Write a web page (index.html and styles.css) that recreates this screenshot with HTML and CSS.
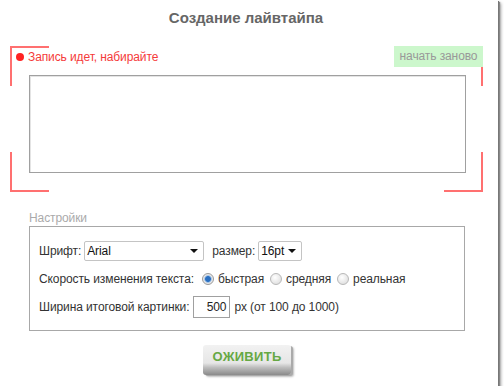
FILE: index.html
```html
<!DOCTYPE html>
<html lang="ru">
<head>
<meta charset="utf-8">
<title>Создание лайвтайпа</title>
<link rel="stylesheet" href="styles.css">
</head>
<body>
<div class="window">
  <h1 class="title">Создание лайвтайпа</h1>
  <div class="recorder">
    <span class="corner tl"></span><span class="corner tr"></span>
    <span class="corner bl"></span><span class="corner br"></span>
    <div class="status-row">
      <span class="status"><span class="dot"></span>Запись идет, набирайте</span>
      <span class="restart">начать заново</span>
    </div>
    <div class="editor"></div>
  </div>
  <div class="settings">
    <div class="settings-label">Настройки</div>
    <div class="settings-box">
      <div class="row row-font">
        <span class="lbl">Шрифт:</span>
        <span class="select select-font"><span class="val">Arial</span><span class="arrow"></span></span>
        <span class="lbl lbl-size">размер:</span>
        <span class="select select-size"><span class="val">16pt</span><span class="arrow"></span></span>
      </div>
      <div class="row row-speed">
        <span class="lbl">Скорость изменения текста:</span>
        <span class="radio on"></span><span class="opt">быстрая</span>
        <span class="radio"></span><span class="opt">средняя</span>
        <span class="radio"></span><span class="opt">реальная</span>
      </div>
      <div class="row row-width">
        <span class="lbl">Ширина итоговой картинки:</span>
        <span class="input">500</span>
        <span class="hint">px (от 100 до 1000)</span>
      </div>
    </div>
  </div>
  <div class="actions">
    <span class="go">ОЖИВИТЬ</span>
  </div>
</div>
</body>
</html>
```
FILE: styles.css
```css
html, body {
  margin: 0;
  padding: 0;
  background: #fff;
}
body {
  font-family: "Liberation Sans", Arial, sans-serif;
  font-size: 12px;
  letter-spacing: -0.1px;
  color: #333;
}
.window {
  width: 498px;
  height: 386px;
  background: #fff;
  box-sizing: border-box;
  box-shadow: 1px 1px 0 #777, 2px 2px 1px #888, 3px 3px 3px rgba(0,0,0,0.35);
  padding-top: 9px;
}
.title {
  margin: 0;
  text-align: center;
  font-size: 15px;
  line-height: 18px;
  font-weight: bold;
  letter-spacing: 0;
  color: #666;
  padding-right: 6px;
}
.recorder {
  position: relative;
  margin: 19px 0 0 10px;
  width: 473px;
  height: 146px;
}
.corner {
  position: absolute;
  width: 37px;
  height: 38px;
  border: 0 solid #ff7070;
}
.corner.tl { left: 0; top: 0; border-top-width: 2px; border-left-width: 2px; }
.corner.tr { right: 0; top: 0; border-top-width: 2px; border-right-width: 2px; }
.corner.bl { left: 0; bottom: 0; border-bottom-width: 2px; border-left-width: 2px; }
.corner.br { right: 0; bottom: 0; border-bottom-width: 2px; border-right-width: 2px; }
.status-row {
  display: flex;
  justify-content: space-between;
  align-items: center;
  height: 21px;
}
.status {
  display: flex;
  align-items: center;
  color: #f53a3a;
  padding-left: 6px;
  position: relative;
  z-index: 1;
}
.dot {
  width: 8px;
  height: 8px;
  border-radius: 50%;
  background: #f22;
  margin-right: 4px;
}
.restart {
  position: relative;
  z-index: 1;
  background: #ccf7cc;
  color: #999;
  width: 89px;
  box-sizing: border-box;
  text-align: center;
  height: 21px;
  line-height: 20px;
}
.editor {
  margin: 8px 0 0 19px;
  width: 437px;
  height: 98px;
  box-sizing: border-box;
  border: 1px solid #a0a0a0;
  box-shadow: inset 1px 1px 0 #e4e4e4;
  background: #fff;
}
.settings {
  margin: 19px 0 0 29px;
  width: 436px;
}
.settings-label {
  color: #aaa;
  line-height: 15px;
}
.settings-box {
  border: 1px solid #a8a8a8;
  height: 105px;
  box-sizing: border-box;
  padding: 14px 0 0 9px;
}
.row {
  display: flex;
  align-items: center;
}
.row-font { height: 20px; }
.row-speed { height: 16px; margin-top: 10px; }
.row-width { height: 22px; margin-top: 9px; }
.select {
  display: flex;
  align-items: center;
  justify-content: space-between;
  height: 20px;
  box-sizing: border-box;
  border: 1px solid #c4c4c4;
  border-radius: 2px;
  background: #fff;
  color: #111;
  padding: 0 5px 0 2px;
}
.select-font { width: 120px; margin-left: 3px; }
.select-size { width: 44px; margin-left: 3px; }
.arrow {
  width: 0;
  height: 0;
  border-left: 4px solid transparent;
  border-right: 4px solid transparent;
  border-top: 4px solid #111;
}
.lbl-size { margin-left: 8px; }
.radio {
  width: 12px;
  height: 12px;
  box-sizing: border-box;
  border-radius: 50%;
  border: 1px solid #b8b8b8;
  background: radial-gradient(circle at 40% 35%, #fff, #d8d8d8);
  margin: 0 4px 0 6px;
}
.row-speed .lbl + .radio { margin-left: 8px; }
.radio.on {
  background: radial-gradient(circle, #2a6fc0 0 2.5px, #8fb8e6 3.2px, #e8e8e8 4.2px);
  border-color: #9a9a9a;
}
.input {
  width: 37px;
  height: 22px;
  box-sizing: border-box;
  border: 1px solid #a0a0a0;
  background: #fff;
  text-align: right;
  line-height: 20px;
  padding-right: 3px;
  margin: 0 4px 0 4px;
  color: #222;
}
.actions {
  display: flex;
  justify-content: center;
  margin-top: 14px;
}
.go {
  width: 88px;
  height: 30px;
  box-sizing: border-box;
  display: flex;
  align-items: center;
  justify-content: center;
  padding-bottom: 8px;
  font-size: 13px;
  font-weight: bold;
  color: #66a844;
  letter-spacing: 0.3px;
  background: linear-gradient(#f2f2f2 0, #e6e6e6 60%, #bdbdbd 75%, #8a8a8a 100%);
  border-radius: 3px;
  box-shadow: 2px 1px 0 #aaa, 3px 2px 2px rgba(0,0,0,0.25);
  margin-left: -4px;
}
```
